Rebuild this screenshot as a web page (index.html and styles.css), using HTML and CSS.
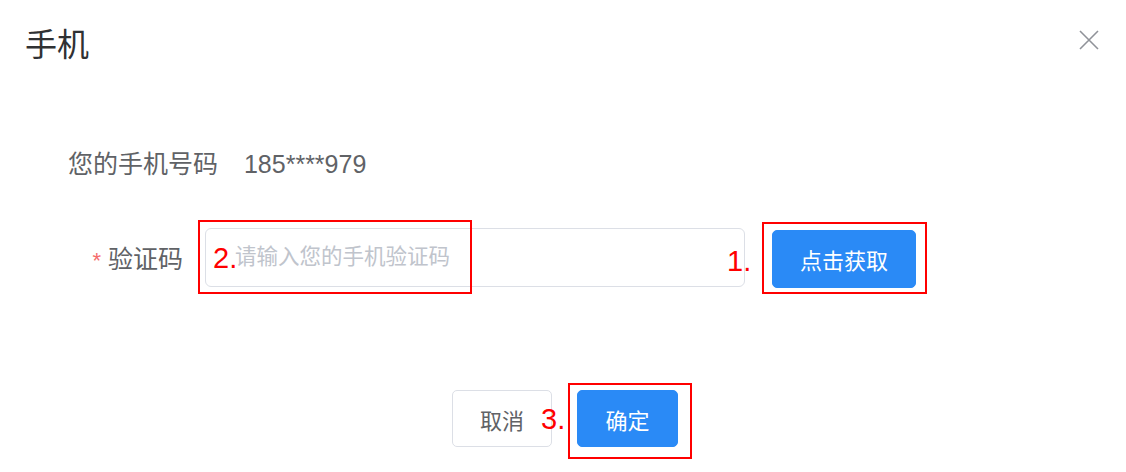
FILE: index.html
```html
<!DOCTYPE html>
<html lang="zh-CN">
<head>
    <meta charset="UTF-8">
    <title>手机</title>
    <link rel="stylesheet" href="styles.css">
</head>
<body>

    <div class="dialogo">
        <div class="cabecera">
            <span class="titulo">手机</span>
            <svg class="cerrar" width="22" height="22" viewBox="0 0 22 22">
                <path d="M2 2 L20 20 M20 2 L2 20" stroke="#909399" stroke-width="1.6" fill="none"/>
            </svg>
        </div>

        <div class="fila-telefono">
            <span>您的手机号码</span>
            <span class="numero">185****979</span>
        </div>

        <div class="fila-codigo">
            <label for="codigo"><span class="requerido">*</span> 验证码</label>
            <div class="campo">
                <input type="text" id="codigo" placeholder="请输入您的手机验证码">
                <span class="marca marca-2">2.</span>
                <div class="caja caja-2"></div>
            </div>
            <div class="boton-envoltura">
                <button class="primario obtener">点击获取</button>
                <span class="marca marca-1">1.</span>
                <div class="caja caja-1"></div>
            </div>
        </div>

        <div class="pie">
            <button class="secundario">取消</button>
            <div class="boton-envoltura">
                <button class="primario confirmar">确定</button>
                <span class="marca marca-3">3.</span>
                <div class="caja caja-3"></div>
            </div>
        </div>
    </div>

</body>
</html>
```

FILE: styles.css
```css
body {
    margin: 0;
    background: white;
    font-family: "Liberation Sans", "Noto Sans CJK SC", sans-serif;
    color: #606266;
}

.dialogo {
    width: 1126px;
    height: 472px;
}

.cabecera {
    height: 86px;
    display: flex;
    align-items: center;
    justify-content: space-between;
    padding: 0 25px;
}

.titulo {
    font-size: 32px;
    color: #303133;
    margin-top: -2px;
}

.cerrar {
    margin-right: 1px;
    margin-top: -6px;
}

.fila-telefono {
    margin-top: 58px;
    height: 40px;
    line-height: 40px;
    padding-left: 68px;
    font-size: 25px;
}

.numero {
    margin-left: 19px;
}

.fila-codigo {
    margin-top: 43px;
    display: flex;
    align-items: center;
}

label {
    width: 183px;
    text-align: right;
    font-size: 25px;
    margin-right: 22px;
    margin-top: -2px;
}

.requerido {
    color: #f56c6c;
    font-size: 22px;
}

.campo {
    position: relative;
}

input {
    width: 540px;
    height: 59px;
    box-sizing: border-box;
    border: 1px solid #dcdfe6;
    border-radius: 6px;
    padding-left: 29px;
    font-size: 21.5px;
    font-family: "Liberation Sans", "Noto Sans CJK SC", sans-serif;
    outline: none;
}

input::placeholder {
    color: #c0c4cc;
}

.boton-envoltura {
    position: relative;
}

button {
    font-size: 22px;
    font-family: "Liberation Sans", "Noto Sans CJK SC", sans-serif;
    border-radius: 5px;
    cursor: pointer;
}

.primario {
    background-color: #2a8af6;
    border: 1px solid #2a8af6;
    color: white;
}

.secundario {
    background: white;
    border: 1px solid #dcdfe6;
    color: #606266;
}

.obtener {
    margin-left: 27px;
    margin-top: 3px;
    width: 144px;
    height: 58px;
}

.pie {
    margin-top: 102px;
    display: flex;
    justify-content: center;
    gap: 25px;
    padding-left: 4px;
}

.pie button {
    width: 100px;
    height: 57px;
}

.pie .confirmar {
    width: 101px;
}

/* anotaciones en rojo */
.caja {
    position: absolute;
    border: 2px solid #f00;
    box-sizing: border-box;
    pointer-events: none;
}

.marca {
    position: absolute;
    color: #f00;
    font-size: 29px;
    line-height: 1;
}

.caja-2 {
    left: -7px;
    top: -8px;
    width: 274px;
    height: 74px;
}

.marca-2 {
    left: 8px;
    top: 16px;
}

.caja-1 {
    left: 17px;
    top: -5px;
    width: 165px;
    height: 72px;
}

.marca-1 {
    left: -18px;
    top: 20px;
}

.caja-3 {
    left: -9px;
    top: -7px;
    width: 124px;
    height: 76px;
}

.marca-3 {
    left: -36px;
    top: 15px;
}
```
